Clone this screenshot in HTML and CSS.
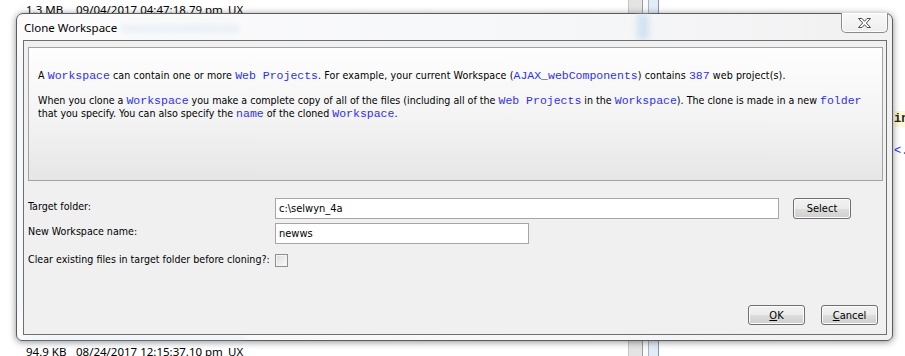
FILE: index.html
```html
<!doctype html>
<html lang="en">
  <head>
    <meta charset="UTF-8" />
    <title>Clone Workspace</title>
    <link rel="stylesheet" href="styles.css">
  </head>
  <body>
    <div class="desktop">
      <div class="files">
        <div class="file-row">
          <span class="size">1.3 MB</span><span class="date">09/04/2017 04:47:18.79 pm</span><span>UX</span>
        </div>
        <div class="file-row">
          <span class="size">94.9 KB</span><span class="date">08/24/2017 12:15:37.10 pm</span><span>UX</span>
        </div>
      </div>
      <div class="strip">
        <div class="strip-gray"></div>
        <div class="strip-gap"></div>
        <div class="strip-blue"></div>
      </div>
      <div class="code">
        <div class="code-line hl">in</div>
        <div class="code-line tag">&lt;.</div>
      </div>
    </div>

    <div class="dialog">
      <!-- aero glass: background showing through, blurred -->
      <span class="blur blur-title"></span>
      <span class="blur blur-strip"></span>
      <span class="blur blur-bottom"></span>
      <span class="blur blur-left"></span>

      <div class="titlebar">
        <span class="title">Clone Workspace</span>
        <button class="close" aria-label="Close">
          <svg width="15" height="12" viewBox="0 0 15 12">
            <path d="M1.5 1.5H5L7.5 4.3L10 1.5H13.5L9.3 6L13.5 10.5H10L7.5 7.7L5 10.5H1.5L5.7 6Z"
                  fill="#fff" stroke="#4d4d4d" stroke-width="1" stroke-linejoin="round" />
          </svg>
        </button>
      </div>

      <div class="client">
        <div class="info">
          <p>A <code>Workspace</code> can contain one or more <code>Web Projects</code>. For example, your current Workspace (<code>AJAX_webComponents</code>) contains <code>387</code> web project(s).</p>
          <p>When you clone a <code>Workspace</code> you make a complete copy of all of the files (including all of the <code>Web Projects</code> in the <code>Workspace</code>). The clone is made in a new <code>folder</code><br>that you specify. You can also specify the <code>name</code> of the cloned <code>Workspace</code>.</p>
        </div>

        <div class="form">
          <label class="label" for="targetFolder">Target folder:</label>
          <div class="field">
            <input id="targetFolder" class="text text-wide" type="text" value="c:\selwyn_4a" />
            <button class="btn btn-select">Select</button>
          </div>

          <label class="label" for="wsName">New Workspace name:</label>
          <div class="field">
            <input id="wsName" class="text text-short" type="text" value="newws" />
          </div>

          <label class="label label-check" for="clearFiles">Clear existing files in target folder before cloning?:</label>
          <div class="field">
            <input id="clearFiles" class="check" type="checkbox" />
          </div>
        </div>

        <div class="actions">
          <button class="btn btn-action"><u>O</u>K</button>
          <button class="btn btn-action"><u>C</u>ancel</button>
        </div>
      </div>
    </div>
  </body>
</html>
```

FILE: styles.css
```css
html,
body {
  margin: 0;
  padding: 0;
}
body {
  width: 905px;
  height: 356px;
  overflow: hidden;
  position: relative;
  background: #fff;
  color: #000;
  font-family: "DejaVu Sans Condensed", "DejaVu Sans", sans-serif;
  font-size: 10.6px;
}

/* --- what lies behind the dialog --- */
.desktop {
  display: grid;
  grid-template-columns: 628px 32px 1fr;
  height: 356px;
}
.files {
  display: flex;
  flex-direction: column;
  justify-content: space-between;
  height: 359px;
  padding: 2px 0 0 26px;
  box-sizing: border-box;
  font-family: "Noto Sans", sans-serif;
  font-size: 11.5px;
  line-height: 15px;
}
.file-row {
  display: flex;
}
.size {
  width: 50px;
}
.date {
  width: 152px;
}
.strip {
  display: flex;
}
.strip-gray {
  width: 13px;
  background: #e4e4e4;
  border-left: 1px solid #c4c4c4;
  border-right: 1px solid #9c9c9c;
}
.strip-gap {
  width: 5px;
  background: #fafafa;
}
.strip-blue {
  width: 9px;
  background: #e3ecf6;
  border-left: 1px solid #9fb4cf;
  border-right: 1px solid #7f97b6;
}
.code {
  padding: 111px 0 0 234px;
  font-family: "Liberation Mono", monospace;
  font-size: 12px;
  line-height: 16px;
}
.code-line {
  white-space: nowrap;
  margin-bottom: 16px;
}
.hl {
  background: #fdf9d9;
  color: #222;
  font-weight: bold;
}
.tag {
  color: #2b2bff;
}

/* --- dialog window --- */
.dialog {
  position: absolute;
  left: 16px;
  top: 13px;
  width: 877px;
  height: 328px;
  box-sizing: border-box;
  display: flex;
  flex-direction: column;
  padding: 0 5px 5px 6px;
  border: 1px solid #5b5b5b;
  border-radius: 7px 7px 6px 6px;
  background: linear-gradient(to right, #fbfbfc 0%, #f6f7f8 60%, #f1f1f2 100%);
  box-shadow: 0 1px 7px rgba(0, 0, 0, 0.45);
}
.blur {
  position: absolute;
  background: #bcd7ee;
  filter: blur(3px);
  opacity: 0.3;
}
.blur-title {
  left: 104px;
  top: 11px;
  width: 118px;
  height: 7px;
}
.blur-strip {
  left: 620px;
  top: 0;
  width: 12px;
  height: 26px;
  opacity: 0.6;
}
.blur-bottom {
  left: 8px;
  bottom: -1px;
  width: 220px;
  height: 4px;
}
.blur-left {
  left: 1px;
  top: 40px;
  width: 3px;
  height: 260px;
  opacity: 0.25;
}
.titlebar {
  position: relative;
  display: flex;
  justify-content: space-between;
  align-items: flex-start;
  height: 26px;
}
.title {
  padding: 6px 0 0 1px;
  font-family: "Noto Sans", sans-serif;
  font-size: 11.5px;
  line-height: 15px;
  color: #000;
}
.close {
  margin: -1px -1px 0 0;
  width: 47px;
  height: 20px;
  padding: 0;
  display: flex;
  align-items: center;
  justify-content: center;
  border: 1px solid #8b8b8b;
  border-top: none;
  border-radius: 0 0 5px 5px;
  background: linear-gradient(#f8f8f8, #eeeeee);
  box-shadow: inset 0 0 0 1px rgba(255, 255, 255, 0.8);
}
.client {
  position: relative;
  flex: 1;
  display: flex;
  flex-direction: column;
  padding: 6px 3px 0 4px;
  border: 1px solid #6f6f6f;
  background: #f0f0f0;
}

/* info panel */
.info {
  height: 134px;
  box-sizing: border-box;
  padding: 21px 9px 0 9px;
  border: 1px solid #a3a3a3;
  background: linear-gradient(#fefefe 0%, #f3f3f3 55%, #e6e6e6 100%);
  white-space: nowrap;
  line-height: 13px;
}
.info p {
  margin: 0 0 12px 0;
}
.info p:first-child {
  letter-spacing: 0.1px;
}
code {
  font-family: "Liberation Mono", monospace;
  font-size: 11.5px;
  letter-spacing: 0;
  color: #2f2ff0;
}

/* form */
.form {
  flex: 1;
  display: grid;
  grid-template-columns: 247px 1fr;
  grid-auto-rows: min-content;
  row-gap: 4px;
  padding-top: 17px;
}
.label {
  padding-top: 2px;
  line-height: 13px;
  white-space: nowrap;
}
.label-check {
  margin-top: 3px;
}
.field {
  display: flex;
  align-items: flex-start;
  gap: 14px;
}
.text {
  box-sizing: border-box;
  height: 21px;
  margin: 0;
  padding: 0 3px;
  border: 1px solid #a6a6a6;
  background: #fff;
  font-family: inherit;
  font-size: 11px;
  line-height: 19px;
  color: #000;
  outline: none;
}
.text-wide {
  width: 504px;
}
.text-short {
  width: 254px;
}
.check {
  appearance: none;
  box-sizing: border-box;
  width: 13px;
  height: 13px;
  margin: 6px 0 0 0;
  border: 1px solid #8e8f8f;
  background: linear-gradient(135deg, #dcdcdc, #fbfbfb);
  box-shadow: inset 0 0 0 1px #f4f4f4;
}

/* buttons */
.btn {
  box-sizing: border-box;
  margin: 0;
  padding: 0;
  border: 1px solid #707070;
  border-radius: 3px;
  background: linear-gradient(#f2f2f2 0%, #ebebeb 50%, #dddddd 51%, #cfcfcf 100%);
  box-shadow: inset 0 0 0 1px #fbfbfb;
  font-family: inherit;
  font-size: 11px;
  color: #000;
}
.btn-select {
  width: 58px;
  height: 21px;
}
.actions {
  display: flex;
  justify-content: flex-end;
  gap: 16px;
  padding: 0 5px 9px 0;
}
.btn-action {
  width: 57px;
  height: 20px;
}
```
